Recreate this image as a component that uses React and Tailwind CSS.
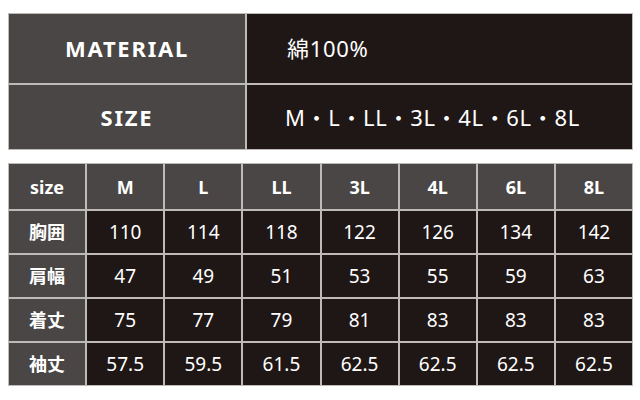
const sizes = ["M", "L", "LL", "3L", "4L", "6L", "8L"];
const rows = [
  { label: "胸囲", values: ["110", "114", "118", "122", "126", "134", "142"] },
  { label: "肩幅", values: ["47", "49", "51", "53", "55", "59", "63"] },
  { label: "着丈", values: ["75", "77", "79", "81", "83", "83", "83"] },
  { label: "袖丈", values: ["57.5", "59.5", "61.5", "62.5", "62.5", "62.5", "62.5"] },
];

const font = { fontFamily: '"Noto Sans", "Noto Sans CJK JP", sans-serif' };

export default function App() {
  return (
    <div className="w-[640px] h-[400px] bg-white text-white overflow-hidden" style={font}>
      {/* Material / size summary */}
      <div className="mx-[8px] mt-[13px] w-[625px] grid grid-cols-[236px_1fr] gap-[2px] bg-[#bdbab8] p-[1px]">
        <div className="h-[69px] bg-[#4a4645] flex items-center justify-center text-[22px] font-bold tracking-[0.08em]">
          MATERIAL
        </div>
        <div className="h-[69px] bg-[#1f1716] flex items-center pl-[40px] text-[22px] tracking-[0.03em]">
          綿100%
        </div>
        <div className="h-[64px] bg-[#4a4645] flex items-center justify-center text-[22px] font-bold tracking-[0.08em]">
          SIZE
        </div>
        <div className="h-[64px] bg-[#1f1716] flex items-center pl-[38px] text-[22px] tracking-[0.03em]">
          M・L・LL・3L・4L・6L・8L
        </div>
      </div>

      {/* Size chart */}
      <div className="mx-[8px] mt-[13px] w-[625px] grid grid-cols-8 gap-[2px] bg-[#bdbab8] p-[1px]">
        <div className="h-[45px] pt-[2px] bg-[#4a4645] flex items-center justify-center text-[18px] font-bold">size</div>
        {sizes.map((s) => (
          <div key={s} className="h-[45px] pt-[2px] bg-[#4a4645] flex items-center justify-center text-[18px] font-bold">
            {s}
          </div>
        ))}
        {rows.map((r) => (
          <>
            <div key={r.label} className="h-[42px] bg-[#4a4645] flex items-center justify-center text-[18px] font-bold">
              {r.label}
            </div>
            {r.values.map((v, i) => (
              <div key={r.label + i} className="h-[42px] bg-[#1f1716] flex items-center justify-center text-[19px]">
                {v}
              </div>
            ))}
          </>
        ))}
      </div>
    </div>
  );
}
